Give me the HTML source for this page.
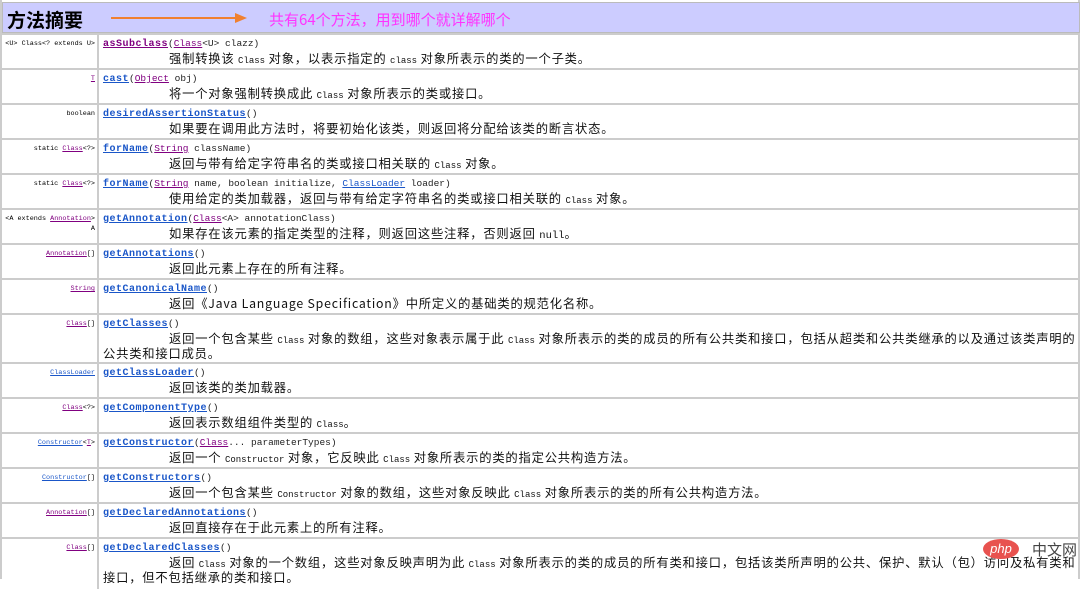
<!DOCTYPE html>
<html><head><meta charset="utf-8"><style>
body{margin:0;width:1086px;height:579px;overflow:hidden;background:#fff;font-family:"Liberation Sans","Noto Sans CJK SC",sans-serif;position:relative}
.hd{position:absolute;left:2px;top:2px;width:1076px;height:29px;background:#ccccff;border:1px solid #bbb}
.hd b{position:absolute;left:4px;top:3px;font-size:19px;font-family:"Noto Sans CJK SC",sans-serif;color:#000}
.hd .note{position:absolute;left:266px;top:6px;font-size:15px;color:#ff33ff;font-family:"Noto Sans CJK SC",sans-serif}
.row{position:absolute;left:2px;width:1076px;border-top:2px solid #ccc;overflow:hidden}
.l{position:absolute;left:0;width:97px;top:0;bottom:0;border-right:2px solid #ccc;text-align:right;font:6.8px "Liberation Mono",monospace;padding-top:4px;box-sizing:border-box;padding-right:2px;line-height:10px}
.r{position:absolute;left:101px;right:0;top:1px;font-size:11.5px;line-height:15px}
.m{font:bold 10px "Liberation Mono",monospace;color:#1a56c8;text-decoration:underline;letter-spacing:.5px}
.p{font:9.5px "Liberation Mono",monospace;color:#222}
.pu{color:#800080;text-decoration:underline}
.bl{color:#1a56c8;text-decoration:underline}
.c{font:9px "Liberation Mono",monospace;letter-spacing:0}
.d{padding-left:66px;font-family:"Noto Sans CJK SC",sans-serif;color:#111;font-size:12.3px;letter-spacing:.8px;white-space:nowrap}
.d2{font-family:"Noto Sans CJK SC",sans-serif;color:#111;font-size:12.3px;letter-spacing:.8px}
.edge{position:absolute;left:0;top:0;width:2px;height:579px;background:#ccc}
.edge2{position:absolute;left:1078px;top:0;width:2px;height:579px;background:#ccc}
</style></head><body>
<div class="edge"></div><div class="edge2"></div>
<div class="hd"><b>方法摘要</b>
<svg style="position:absolute;left:108px;top:9px" width="140" height="12"><line x1="0" y1="6" x2="126" y2="6" stroke="#f08030" stroke-width="2"/><polygon points="124,1 136,6 124,11" fill="#f08030"/></svg>
<span class="note">共有64个方法，用到哪个就详解哪个</span></div>

<div class="row" style="top:33px;height:33px"><div class="l">&lt;U&gt; Class&lt;? extends U&gt;</div><div class="r"><span class="m pu" style="color:#800080">asSubclass</span><span class="p">(<span class="pu">Class</span>&lt;U&gt; clazz)</span><div class="d">强制转换该 <span class="c">Class</span> 对象，以表示指定的 <span class="c">class</span> 对象所表示的类的一个子类。</div></div></div>
<div class="row" style="top:68px;height:33px"><div class="l"><span class="pu">T</span></div><div class="r"><span class="m">cast</span><span class="p">(<span class="pu">Object</span> obj)</span><div class="d">将一个对象强制转换成此 <span class="c">Class</span> 对象所表示的类或接口。</div></div></div>
<div class="row" style="top:103px;height:33px"><div class="l">boolean</div><div class="r"><span class="m">desiredAssertionStatus</span><span class="p">()</span><div class="d">如果要在调用此方法时，将要初始化该类，则返回将分配给该类的断言状态。</div></div></div>
<div class="row" style="top:138px;height:33px"><div class="l">static <span class="pu">Class</span>&lt;?&gt;</div><div class="r"><span class="m">forName</span><span class="p">(<span class="pu">String</span> className)</span><div class="d">返回与带有给定字符串名的类或接口相关联的 <span class="c">Class</span> 对象。</div></div></div>
<div class="row" style="top:173px;height:33px"><div class="l">static <span class="pu">Class</span>&lt;?&gt;</div><div class="r"><span class="m">forName</span><span class="p">(<span class="pu">String</span> name, boolean initialize, <span class="bl">ClassLoader</span> loader)</span><div class="d">使用给定的类加载器，返回与带有给定字符串名的类或接口相关联的 <span class="c">Class</span> 对象。</div></div></div>
<div class="row" style="top:208px;height:33px"><div class="l">&lt;A extends <span class="pu">Annotation</span>&gt;<br>A</div><div class="r"><span class="m">getAnnotation</span><span class="p">(<span class="pu">Class</span>&lt;A&gt; annotationClass)</span><div class="d">如果存在该元素的指定类型的注释，则返回这些注释，否则返回 <span class="c" style="font-size:10.5px">null</span>。</div></div></div>
<div class="row" style="top:243px;height:33px"><div class="l"><span class="pu">Annotation</span>[]</div><div class="r"><span class="m">getAnnotations</span><span class="p">()</span><div class="d">返回此元素上存在的所有注释。</div></div></div>
<div class="row" style="top:278px;height:33px"><div class="l"><span class="pu">String</span></div><div class="r"><span class="m">getCanonicalName</span><span class="p">()</span><div class="d">返回《Java Language Specification》中所定义的基础类的规范化名称。</div></div></div>
<div class="row" style="top:313px;height:47px"><div class="l"><span class="pu">Class</span>[]</div><div class="r"><span class="m">getClasses</span><span class="p">()</span><div class="d">返回一个包含某些 <span class="c">Class</span> 对象的数组，这些对象表示属于此 <span class="c">Class</span> 对象所表示的类的成员的所有公共类和接口，包括从超类和公共类继承的以及通过该类声明的</div><div class="d2">公共类和接口成员。</div></div></div>
<div class="row" style="top:362px;height:33px"><div class="l"><span class="bl">ClassLoader</span></div><div class="r"><span class="m">getClassLoader</span><span class="p">()</span><div class="d">返回该类的类加载器。</div></div></div>
<div class="row" style="top:397px;height:33px"><div class="l"><span class="pu">Class</span>&lt;?&gt;</div><div class="r"><span class="m">getComponentType</span><span class="p">()</span><div class="d">返回表示数组组件类型的 <span class="c">Class</span>。</div></div></div>
<div class="row" style="top:432px;height:33px"><div class="l"><span class="bl">Constructor</span>&lt;<span class="pu">T</span>&gt;</div><div class="r"><span class="m">getConstructor</span><span class="p">(<span class="pu">Class</span>... parameterTypes)</span><div class="d">返回一个 <span class="c">Constructor</span> 对象，它反映此 <span class="c">Class</span> 对象所表示的类的指定公共构造方法。</div></div></div>
<div class="row" style="top:467px;height:33px"><div class="l"><span class="bl">Constructor</span>[]</div><div class="r"><span class="m">getConstructors</span><span class="p">()</span><div class="d">返回一个包含某些 <span class="c">Constructor</span> 对象的数组，这些对象反映此 <span class="c">Class</span> 对象所表示的类的所有公共构造方法。</div></div></div>
<div class="row" style="top:502px;height:33px"><div class="l"><span class="pu">Annotation</span>[]</div><div class="r"><span class="m">getDeclaredAnnotations</span><span class="p">()</span><div class="d">返回直接存在于此元素上的所有注释。</div></div></div>
<div class="row" style="top:537px;height:50px"><div class="l"><span class="pu">Class</span>[]</div><div class="r"><span class="m">getDeclaredClasses</span><span class="p">()</span><div class="d">返回 <span class="c">Class</span> 对象的一个数组，这些对象反映声明为此 <span class="c">Class</span> 对象所表示的类的成员的所有类和接口，包括该类所声明的公共、保护、默认（包）访问及私有类和</div><div class="d2">接口，但不包括继承的类和接口。</div></div></div>

<div style="position:absolute;left:983px;top:539px;width:36px;height:20px;background:#e8524f;border-radius:50%;color:#fff;font:italic 13px 'Liberation Sans',sans-serif;text-align:center;line-height:19px">php</div>
<div style="position:absolute;left:1032px;top:539px;font:15px 'Noto Sans CJK SC',sans-serif;color:#444">中文网</div>
</body></html>
